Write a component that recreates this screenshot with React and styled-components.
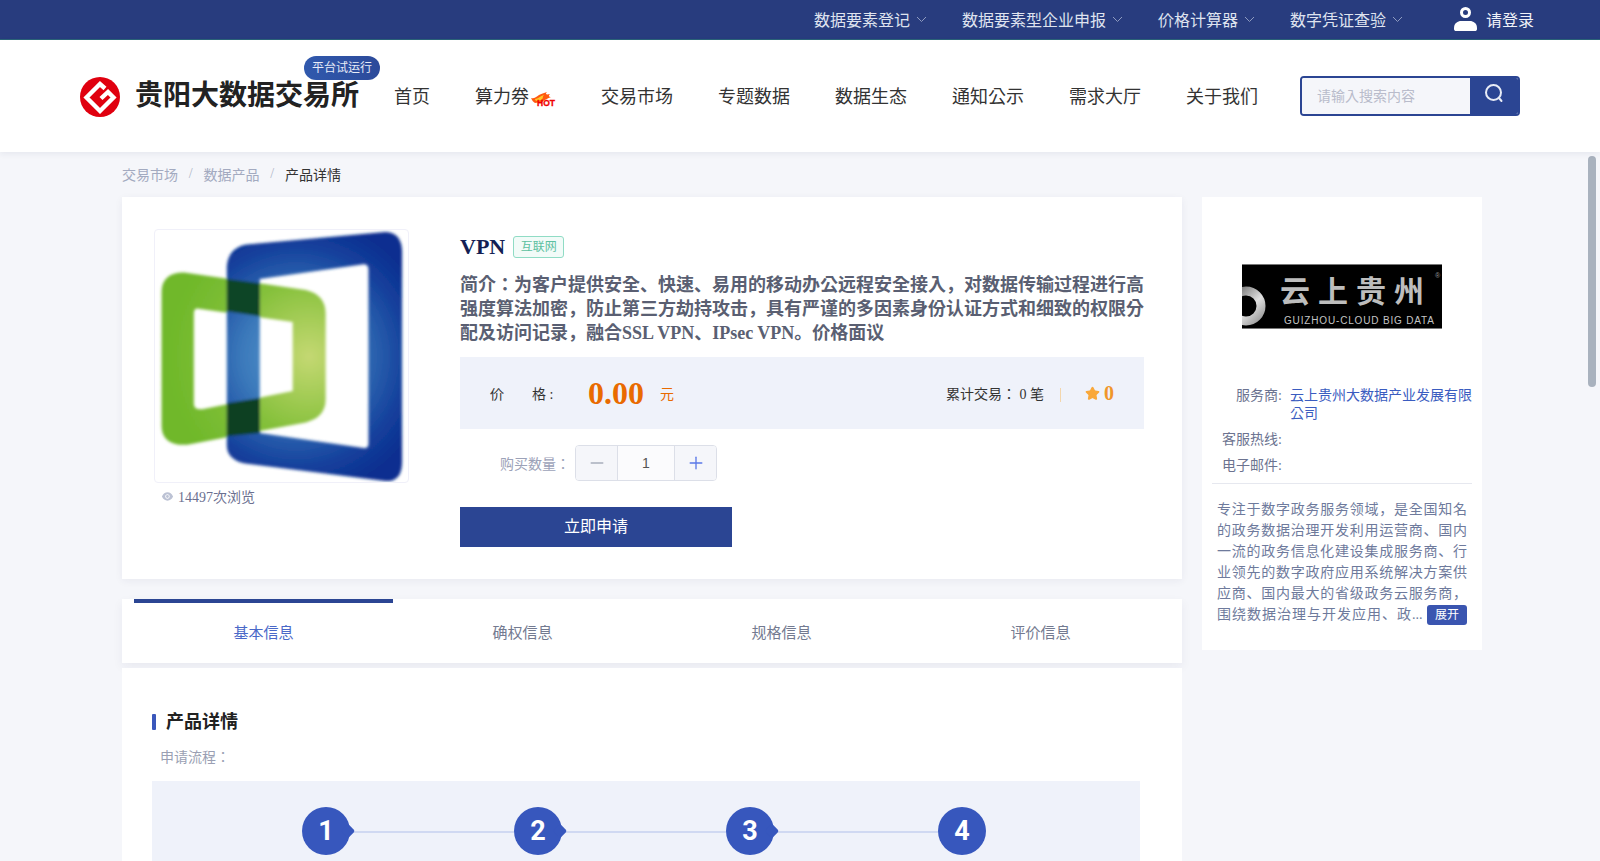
import React from 'react';
import styled, { createGlobalStyle } from 'styled-components';
import { Minus, Plus, Star } from 'lucide-react';
import { AiFillEye } from 'react-icons/ai';

const GlobalStyle = createGlobalStyle`
  html, body {
    margin: 0;
    padding: 0;
    height: 100%;
    overflow: hidden;
    background: #f5f6fa;
    font-family: "Liberation Serif", "Noto Sans CJK KR", serif;
    color: #333;
  }
  * {
    box-sizing: border-box;
  }
`;

const Page = styled.div`
  height: 861px;
  display: flex;
  flex-direction: column;
  overflow: hidden;
`;

const TopBar = styled.div`
  height: 40px;
  flex: none;
  background: #283c7e;
  border-bottom: 1px solid #2b6478;
  display: flex;
  justify-content: flex-end;
  align-items: center;
  padding: 0 66px 2px 0;
  color: #dfe3ef;
  font-size: 16px;
`;

const TopLink = styled.div`
  display: flex;
  align-items: center;
  margin-right: 35px;
`;

const Chevron = styled.svg`
  width: 11px;
  height: 7px;
  margin: 2px 0 0 6px;
`;

const LoginLink = styled.div`
  display: flex;
  align-items: center;
  gap: 9px;
  margin-left: 16px;
  color: #f0f2f8;
`;

const Header = styled.header`
  height: 112px;
  flex: none;
  background: #fff;
  box-shadow: 0 2px 6px rgba(30, 40, 80, 0.07);
  display: flex;
  align-items: center;
  padding-left: 80px;
  position: relative;
  z-index: 2;
`;

const Brand = styled.div`
  display: flex;
  align-items: center;
  gap: 15px;
  position: relative;
  margin-right: 35px;
`;

const BrandLogo = styled.svg`
  width: 40px;
  height: 40px;
  margin-top: 2px;
`;

const BrandName = styled.div`
  font-size: 28px;
  line-height: 36px;
  font-weight: 700;
  color: #222;
  white-space: nowrap;
`;

const TrialBadge = styled.span`
  position: absolute;
  top: -19px;
  right: -21px;
  width: 76px;
  height: 24px;
  border-radius: 12px;
  background: linear-gradient(90deg, #3059ad, #2c4a9a);
  color: #e8ecf8;
  font-size: 12px;
  line-height: 24px;
  text-align: center;
`;

const Nav = styled.nav`
  display: flex;
  align-items: center;
  gap: 45px;
  font-size: 18px;
  color: #333;
  margin-right: 42px;
  padding-bottom: 2px;
`;

const NavItem = styled.a`
  display: flex;
  align-items: center;
  white-space: nowrap;
`;

const HotMark = styled.svg`
  width: 27px;
  height: 16px;
  margin-top: 10px;
`;

const Search = styled.div`
  width: 220px;
  height: 40px;
  display: flex;
  border: 2px solid #2b4593;
  border-radius: 4px;
  overflow: hidden;
`;

const SearchInput = styled.input`
  flex: 1;
  min-width: 0;
  border: 0;
  outline: 0;
  background: #f5f6fa;
  padding: 2px 15px 0;
  font-family: inherit;
  font-size: 14px;

  &::placeholder {
    color: #b9bccb;
  }
`;

const SearchButton = styled.div`
  width: 48px;
  flex: none;
  background: #2b4593;
  display: flex;
  align-items: center;
  justify-content: center;
  padding-bottom: 7px;
`;

const Content = styled.main`
  flex: 1;
  position: relative;
  padding-left: 122px;
`;

const ScrollThumb = styled.div`
  position: absolute;
  top: 4px;
  right: 4px;
  width: 8px;
  height: 231px;
  border-radius: 4px;
  background: #a9b2be;
`;

const Crumbs = styled.div`
  display: flex;
  align-items: center;
  height: 18px;
  margin: 13px 0 14px;
  font-size: 14px;
  color: #a3aac0;
`;

const CrumbSep = styled.span`
  width: 25.5px;
  text-align: center;
  color: #b0b6c8;
`;

const CrumbCurrent = styled.span`
  color: #333;
`;

const Columns = styled.div`
  display: grid;
  grid-template-columns: 1060px 280px;
  gap: 20px;
  align-items: start;
`;

const ProductCard = styled.section`
  height: 382px;
  padding: 32px 0 0 32px;
  background: #fff;
  box-shadow: 0 2px 8px rgba(30, 40, 80, 0.06);
  display: flex;
  gap: 51px;
`;

const ImageBox = styled.div`
  width: 255px;
  height: 254px;
  border: 1px solid #f0f0f9;
  border-radius: 4px;
  overflow: hidden;
`;

const Views = styled.div`
  display: flex;
  align-items: center;
  gap: 4px;
  height: 18px;
  margin-top: 4px;
  padding-left: 7px;
  font-size: 14px;
  color: #6b7090;

  svg {
    color: #bcc2d4;
  }
`;

const Info = styled.div`
  width: 684px;
`;

const TitleRow = styled.div`
  height: 36px;
  display: flex;
  align-items: center;
  gap: 8px;
  margin-bottom: 8px;
`;

const Title = styled.h1`
  margin: 0;
  font-size: 22px;
  font-weight: 700;
  color: #141f54;
`;

const Tag = styled.span`
  width: 51px;
  height: 22px;
  border: 1px solid #90dcc5;
  border-radius: 3px;
  background: #f2fbf8;
  color: #5cc0a0;
  font-size: 12px;
  line-height: 20px;
  text-align: center;
`;

const Summary = styled.p`
  margin: 0 0 12px;
  font-size: 18px;
  line-height: 24px;
  font-weight: 700;
  color: #5a5f72;
`;

const PricePanel = styled.div`
  height: 72px;
  padding: 0 30px;
  background: #eff2fa;
  display: flex;
  align-items: center;
  justify-content: space-between;
`;

const PriceGroup = styled.div`
  display: flex;
  align-items: center;
  font-size: 14px;
`;

const PriceLabel = styled.span`
  width: 98px;
  white-space: pre;
`;

const PriceValue = styled.span`
  width: 72px;
  font-size: 32px;
  font-weight: 700;
  color: #e96a00;
`;

const PriceUnit = styled.span`
  color: #e96a00;
`;

const StatDivider = styled.span`
  width: 1px;
  height: 14px;
  margin: 3px 24px 0 16px;
  background: #f3d6ac;
`;

const Score = styled.span`
  margin-left: 4px;
  font-size: 20px;
  font-weight: 700;
  color: #f0962a;
`;

const QtyRow = styled.div`
  display: flex;
  align-items: center;
  gap: 5px;
  margin-top: 16px;
  padding-left: 40px;
  font-size: 14px;
  color: #9ca2b8;
`;

const Stepper = styled.div`
  width: 142px;
  height: 36px;
  display: grid;
  grid-template-columns: 41px 1fr 41px;
  border: 1px solid #dcdfe8;
  border-radius: 4px;
  overflow: hidden;
`;

const StepButton = styled.div`
  display: flex;
  align-items: center;
  justify-content: center;
  background: #f5f6fa;
  color: ${(p) => (p.$active ? '#5a78e8' : '#a8aebc')};
`;

const StepValue = styled.div`
  border-left: 1px solid #dcdfe8;
  border-right: 1px solid #dcdfe8;
  background: #fbfbfd;
  font-family: "Liberation Sans", sans-serif;
  color: #555;
  text-align: center;
  line-height: 34px;
`;

const ApplyButton = styled.div`
  width: 272px;
  height: 40px;
  margin-top: 26px;
  background: #2b4593;
  color: #fff;
  font-size: 16px;
  line-height: 40px;
  text-align: center;
`;

const TabsCard = styled.div`
  height: 64px;
  margin-top: 20px;
  padding: 0 12px;
  background: #fff;
  box-shadow: 0 4px 10px rgba(30, 40, 80, 0.06);
  display: flex;
`;

const Tab = styled.div`
  width: 259px;
  position: relative;
  font-size: 15px;
  line-height: 68px;
  text-align: center;
  color: ${(p) => (p.$active ? '#4a68c8' : '#737a90')};

  ${(p) =>
    p.$active &&
    `
    &::before {
      content: '';
      position: absolute;
      top: 0;
      left: 0;
      right: 0;
      height: 4px;
      background: #2b4593;
    }
  `}
`;

const DetailCard = styled.section`
  height: 400px;
  margin-top: 5px;
  padding: 40px 42px 0 30px;
  background: #fff;
`;

const SectionTitle = styled.h2`
  margin: 0;
  display: flex;
  align-items: center;
  gap: 10px;
  font-size: 18px;
  line-height: 28px;
  font-weight: 700;
  color: #222;

  &::before {
    content: '';
    width: 4px;
    height: 16px;
    border-radius: 1px;
    background: #3a57bb;
  }
`;

const FlowLabel = styled.div`
  margin: 12px 0 13px 8px;
  font-size: 14px;
  line-height: 20px;
  color: #9a9fb3;
`;

const FlowPanel = styled.div`
  height: 200px;
  padding: 26px 0 0 150px;
  background: #eff2fa;
  display: flex;
  align-items: flex-start;
`;

const FlowStep = styled.div`
  width: 212px;
  display: flex;
  align-items: center;
`;

const StepDot = styled.div`
  width: 48px;
  height: 48px;
  flex: none;
  border-radius: 50%;
  background: #3757bd;
  color: #fff;
  font-family: Roboto, "Liberation Sans", sans-serif;
  font-size: 27px;
  font-weight: 700;
  line-height: 48px;
  text-align: center;
  position: relative;

  ${(p) =>
    !p.$last &&
    `
    &::after {
      content: '';
      position: absolute;
      top: 19px;
      right: -3px;
      width: 10px;
      height: 10px;
      border-radius: 2px;
      background: #3757bd;
      transform: rotate(45deg);
    }
  `}
`;

const StepLine = styled.div`
  flex: 1;
  height: 2px;
  margin-top: 1px;
  background: #d0d9f2;
`;

const SideCard = styled.aside`
  height: 453px;
  padding-top: 67px;
  background: #fff;
`;

const VendorLogo = styled.svg`
  display: block;
  width: 200px;
  height: 65px;
  margin: 0 auto 58px;
`;

const MetaRow = styled.div`
  display: grid;
  grid-template-columns: 80px 182px;
  gap: 8px;
  margin-bottom: 8px;
  font-size: 14px;
  line-height: 18px;
`;

const MetaLabel = styled.span`
  text-align: right;
  color: #6c7390;
`;

const MetaValue = styled.span`
  color: #3a5cc0;
`;

const SideRule = styled.div`
  height: 1px;
  margin: 0 10px 15px;
  background: #e6e8ef;
`;

const About = styled.p`
  width: 250px;
  margin: 0 0 0 15px;
  font-size: 14px;
  line-height: 21px;
  text-align: justify;
  text-align-last: justify;
  color: #6e7a9c;
`;

const ExpandButton = styled.span`
  display: inline-block;
  width: 40px;
  height: 20px;
  border-radius: 3px;
  background: #3a55b0;
  color: #fff;
  font-size: 12px;
  line-height: 20px;
  text-align: center;
  text-align-last: center;
  vertical-align: 0;
`;

function BrandMark() {
  return (
    <BrandLogo viewBox="0 0 40 40">
      <circle cx="20" cy="20" r="20" fill="#e0000f" />
      <path
        d="M25 11.5 L20 7 L6.5 20.5 L20 34 L33.5 20.5 L28 15 L21 21.5"
        fill="none"
        stroke="#fff"
        strokeWidth="4.4"
        strokeLinejoin="miter"
      />
    </BrandLogo>
  );
}

function HotIcon() {
  return (
    <HotMark viewBox="0 0 27 16">
      <path
        d="M2 6 C5 7 7 5 10 3 C12 2 15 1 18 0 C16 2 17 3 21 2 C19 4 20 5 22 5 C18 7 15 8 13 10 L6 11 C4 10 3 8 2 6 Z"
        fill="#ff5a10"
      />
      <path d="M6 7 C9 7 11 4 15 3 C13 5 15 6 12 8 L8 9 C7 9 6 8 6 7 Z" fill="#ffc82a" />
      <text
        x="8"
        y="14"
        fontFamily="Liberation Sans, sans-serif"
        fontSize="8.5"
        fontWeight="700"
        fill="#f00000"
        stroke="#f00000"
        strokeWidth="0.3"
        textLength="18"
        lengthAdjust="spacingAndGlyphs"
      >
        HOT
      </text>
    </HotMark>
  );
}

function UserIcon() {
  return (
    <svg width="23" height="24" viewBox="0 0 23 24">
      <circle cx="11.5" cy="5.5" r="4" fill="none" stroke="#fff" strokeWidth="3" />
      <path
        d="M0 21 C0 16 4 14 7 14 L16 14 C19 14 23 16 23 21 L23 22 C23 23.5 22 24 21 24 L2 24 C1 24 0 23.5 0 22 Z"
        fill="#fff"
      />
    </svg>
  );
}

function SearchIcon() {
  return (
    <svg width="20" height="20" viewBox="0 0 20 20" fill="none" stroke="#e8ecf6" strokeWidth="2">
      <circle cx="9.5" cy="9.5" r="7.5" />
      <path d="M15 15 L17.5 18" strokeLinecap="round" />
    </svg>
  );
}

function ProductImage() {
  return (
    <svg width="253" height="252" viewBox="72 57 768 763">
      <defs>
        <radialGradient id="green" gradientUnits="userSpaceOnUse" cx="540" cy="440" r="430">
          <stop offset="0" stopColor="#c4d872" />
          <stop offset="0.55" stopColor="#84c03a" />
          <stop offset="1" stopColor="#6fb82a" />
        </radialGradient>
        <radialGradient id="blue" gradientUnits="userSpaceOnUse" cx="500" cy="440" r="420">
          <stop offset="0" stopColor="#5a9ad0" />
          <stop offset="0.4" stopColor="#3a78ba" />
          <stop offset="0.8" stopColor="#14409c" />
          <stop offset="1" stopColor="#0c2f90" />
        </radialGradient>
        <filter id="soft">
          <feGaussianBlur stdDeviation="5" />
        </filter>
      </defs>
      <g filter="url(#soft)">
        <path
          fillRule="evenodd"
          fill="url(#green)"
          d="M92 245 Q92 185 160 185 L530 238 Q590 252 590 310 L590 570 Q590 625 530 640 L170 708 Q92 712 92 650 Z M190 310 Q190 292 205 295 L490 335 L490 545 L215 600 Q190 602 190 585 Z"
        />
        <path
          fillRule="evenodd"
          fill="url(#blue)"
          d="M290 165 Q295 110 350 100 L770 62 Q820 62 822 120 L822 760 Q822 822 770 818 L345 765 Q290 752 290 710 Z M390 205 L705 160 Q720 160 720 175 L720 705 Q720 720 705 718 L390 672 Z"
        />
        <path d="M290 205 L390 218 L390 318 L290 303 Z" fill="#0c4526" />
        <path d="M290 582 L390 566 L390 672 L290 682 Z" fill="#0c4023" />
      </g>
    </svg>
  );
}

function CloudLogo() {
  return (
    <VendorLogo viewBox="0 0 200 65">
      <defs>
        <linearGradient id="ring" x1="0" y1="0" x2="1" y2="1">
          <stop offset="0" stopColor="#666" />
          <stop offset="0.6" stopColor="#e0e0e0" />
          <stop offset="1" stopColor="#999" />
        </linearGradient>
      </defs>
      <rect width="200" height="65" fill="#000" />
      <rect width="200" height="1" fill="#777" />
      <rect y="64" width="200" height="1" fill="#777" />
      <circle cx="4" cy="42" r="15" fill="none" stroke="url(#ring)" strokeWidth="9" />
      <text
        x="38"
        y="38"
        fontFamily="Noto Sans CJK SC, sans-serif"
        fontSize="30"
        fontWeight="700"
        fill="#bdbdbd"
        letterSpacing="8"
      >
        云上贵州
      </text>
      <text x="193" y="14" fontFamily="Liberation Sans, sans-serif" fontSize="7" fill="#999">
        ®
      </text>
      <text
        x="42"
        y="60"
        fontFamily="Liberation Sans, sans-serif"
        fontSize="10"
        fill="#c4c4c4"
        textLength="150"
      >
        GUIZHOU-CLOUD  BIG  DATA
      </text>
    </VendorLogo>
  );
}

const topLinks = ['数据要素登记', '数据要素型企业申报', '价格计算器', '数字凭证查验'];
const navItems = ['首页', '算力券', '交易市场', '专题数据', '数据生态', '通知公示', '需求大厅', '关于我们'];
const tabs = ['基本信息', '确权信息', '规格信息', '评价信息'];

export default function App() {
  return (
    <Page>
      <GlobalStyle />
      <TopBar>
        {topLinks.map((label) => (
          <TopLink key={label}>
            {label}
            <Chevron viewBox="0 0 11 7" fill="none" stroke="#8f9bc0" strokeWidth="1">
              <path d="M1 1 L5.5 5.5 L10 1" />
            </Chevron>
          </TopLink>
        ))}
        <LoginLink>
          <UserIcon />
          请登录
        </LoginLink>
      </TopBar>

      <Header>
        <Brand>
          <BrandMark />
          <BrandName>贵阳大数据交易所</BrandName>
          <TrialBadge>平台试运行</TrialBadge>
        </Brand>
        <Nav>
          {navItems.map((label) => (
            <NavItem key={label}>
              {label}
              {label === '算力券' && <HotIcon />}
            </NavItem>
          ))}
        </Nav>
        <Search>
          <SearchInput placeholder="请输入搜索内容" />
          <SearchButton>
            <SearchIcon />
          </SearchButton>
        </Search>
      </Header>

      <Content>
        <Crumbs>
          交易市场
          <CrumbSep>/</CrumbSep>
          数据产品
          <CrumbSep>/</CrumbSep>
          <CrumbCurrent>产品详情</CrumbCurrent>
        </Crumbs>

        <Columns>
          <div>
            <ProductCard>
              <div>
                <ImageBox>
                  <ProductImage />
                </ImageBox>
                <Views>
                  <AiFillEye size={13} />
                  14497次浏览
                </Views>
              </div>
              <Info>
                <TitleRow>
                  <Title>VPN</Title>
                  <Tag>互联网</Tag>
                </TitleRow>
                <Summary>
                  简介：为客户提供安全、快速、易用的移动办公远程安全接入，对数据传输过程进行高强度算法加密，防止第三方劫持攻击，具有严谨的多因素身份认证方式和细致的权限分配及访问记录，融合SSL
                  VPN、IPsec VPN。价格面议
                </Summary>
                <PricePanel>
                  <PriceGroup>
                    <PriceLabel>价　　格 :</PriceLabel>
                    <PriceValue>0.00</PriceValue>
                    <PriceUnit>元</PriceUnit>
                  </PriceGroup>
                  <PriceGroup>
                    累计交易： 0 笔
                    <StatDivider />
                    <Star size={15} fill="#f9a83a" color="#f9a83a" />
                    <Score>0</Score>
                  </PriceGroup>
                </PricePanel>
                <QtyRow>
                  购买数量：
                  <Stepper>
                    <StepButton>
                      <Minus size={20} strokeWidth={1.6} />
                    </StepButton>
                    <StepValue>1</StepValue>
                    <StepButton $active>
                      <Plus size={20} strokeWidth={1.6} />
                    </StepButton>
                  </Stepper>
                </QtyRow>
                <ApplyButton>立即申请</ApplyButton>
              </Info>
            </ProductCard>

            <TabsCard>
              {tabs.map((label, i) => (
                <Tab key={label} $active={i === 0}>
                  {label}
                </Tab>
              ))}
            </TabsCard>

            <DetailCard>
              <SectionTitle>产品详情</SectionTitle>
              <FlowLabel>申请流程：</FlowLabel>
              <FlowPanel>
                {[1, 2, 3].map((n) => (
                  <FlowStep key={n}>
                    <StepDot>{n}</StepDot>
                    <StepLine />
                  </FlowStep>
                ))}
                <StepDot $last>4</StepDot>
              </FlowPanel>
            </DetailCard>
          </div>

          <SideCard>
            <CloudLogo />
            <MetaRow>
              <MetaLabel>服务商:</MetaLabel>
              <MetaValue>云上贵州大数据产业发展有限公司</MetaValue>
            </MetaRow>
            <MetaRow>
              <MetaLabel>客服热线:</MetaLabel>
              <MetaValue />
            </MetaRow>
            <MetaRow>
              <MetaLabel>电子邮件:</MetaLabel>
              <MetaValue />
            </MetaRow>
            <SideRule />
            <About>
              专注于数字政务服务领域，是全国知名的政务数据治理开发利用运营商、国内一流的政务信息化建设集成服务商、行业领先的数字政府应用系统解决方案供应商、国内最大的省级政务云服务商，围绕数据治理与开发应用、政... <ExpandButton>展开</ExpandButton>
            </About>
          </SideCard>
        </Columns>
        <ScrollThumb />
      </Content>
    </Page>
  );
}
